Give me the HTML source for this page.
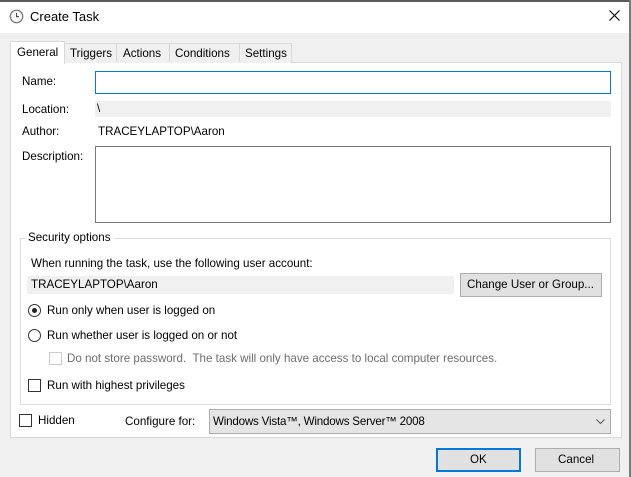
<!DOCTYPE html>
<html><head><meta charset="utf-8"><style>
*{box-sizing:border-box;margin:0;padding:0}
body{width:631px;height:477px;overflow:hidden;background:#f0f0f0;font-family:"Liberation Sans",sans-serif;font-size:11.6px;color:#000;position:relative}
.a{position:absolute;white-space:nowrap}
.t{line-height:14px}
</style></head><body>
<div class="a" style="left:0;top:0;width:631px;height:33px;background:#fff"></div>
<div class="a" style="left:0;top:0;width:631px;height:2px;background:#5a5a5a"></div>
<div class="a" style="left:629px;top:0;width:2px;height:477px;background:#7a7a7a"></div>
<svg class="a" style="left:9px;top:9px" width="15" height="15" viewBox="0 0 15 15"><circle cx="7.5" cy="7.5" r="6.3" fill="#e8e8e0" stroke="#777" stroke-width="1.2"/><circle cx="7.5" cy="7.5" r="4.6" fill="#fff"/><path d="M7.5 4v3.7h2.6" stroke="#444" stroke-width="1.1" fill="none"/></svg>
<div class="a t" style="left:30px;top:10px;font-size:13px">Create Task</div>
<svg class="a" style="left:609px;top:10px" width="11" height="11"><path d="M0.5 0.5L10.5 10.5M10.5 0.5L0.5 10.5" stroke="#000" stroke-width="1.1"/></svg>

<div class="a" style="left:10px;top:62px;width:612px;height:376px;background:#fff;border:1px solid #d9d9d9"></div>
<div class="a" style="left:10px;top:41px;width:55px;height:23px;background:#fff;border:1px solid #d9d9d9;border-bottom:none"></div>
<div class="a t" style="left:17px;top:46px">General</div>
<div class="a" style="left:64px;top:43px;width:228px;height:20px;background:#f0f0f0;border:1px solid #d9d9d9;border-bottom:none"></div>
<div class="a" style="left:116px;top:43px;width:1px;height:19px;background:#d9d9d9"></div>
<div class="a" style="left:169px;top:43px;width:1px;height:19px;background:#d9d9d9"></div>
<div class="a" style="left:239px;top:43px;width:1px;height:19px;background:#d9d9d9"></div>
<div class="a t" style="left:70px;top:47px">Triggers</div>
<div class="a t" style="left:123px;top:47px">Actions</div>
<div class="a t" style="left:175px;top:47px">Conditions</div>
<div class="a t" style="left:245px;top:47px">Settings</div>

<div class="a t" style="left:22px;top:75px">Name:</div>
<div class="a" style="left:95px;top:71px;width:516px;height:23px;border:1px solid #0078d7;background:#fff"></div>
<div class="a t" style="left:22px;top:103px">Location:</div>
<div class="a" style="left:95px;top:101px;width:516px;height:16px;background:#f0f0f0"></div>
<div class="a t" style="left:97px;top:102px">\</div>
<div class="a t" style="left:22px;top:125px">Author:</div>
<div class="a t" style="left:98px;top:125px">TRACEYLAPTOP\Aaron</div>
<div class="a t" style="left:22px;top:150px">Description:</div>
<div class="a" style="left:95px;top:146px;width:516px;height:77px;border:1px solid #7a7a7a;background:#fff"></div>

<div class="a" style="left:20px;top:238px;width:591px;height:167px;border:1px solid #dcdcdc"></div>
<div class="a t" style="left:25px;top:231px;background:#fff;padding:0 3px">Security options</div>
<div class="a t" style="left:31px;top:257px">When running the task, use the following user account:</div>
<div class="a" style="left:27px;top:276px;width:427px;height:18px;background:#f0f0f0"></div>
<div class="a t" style="left:31px;top:278px">TRACEYLAPTOP\Aaron</div>
<div class="a" style="left:460px;top:273px;width:142px;height:24px;background:#e1e1e1;border:1px solid #adadad"></div>
<div class="a t" style="left:467px;top:278px">Change User or Group...</div>

<div class="a" style="left:28px;top:304px;width:13px;height:13px;border:1px solid #333;border-radius:50%;background:#fff"></div>
<div class="a" style="left:32px;top:308px;width:5px;height:5px;border-radius:50%;background:#222"></div>
<div class="a t" style="left:47px;top:304px">Run only when user is logged on</div>
<div class="a" style="left:28px;top:329px;width:13px;height:13px;border:1px solid #333;border-radius:50%;background:#fff"></div>
<div class="a t" style="left:47px;top:329px">Run whether user is logged on or not</div>
<div class="a" style="left:49px;top:352px;width:13px;height:13px;border:1px solid #ccc;background:#fff"></div>
<div class="a t" style="left:67px;top:352px;color:#6d6d6d">Do not store password.&nbsp; The task will only have access to local computer resources.</div>
<div class="a" style="left:28px;top:379px;width:13px;height:13px;border:1px solid #333;background:#fff"></div>
<div class="a t" style="left:47px;top:379px">Run with highest privileges</div>

<div class="a" style="left:19px;top:414px;width:13px;height:13px;border:1px solid #333;background:#fff"></div>
<div class="a t" style="left:38px;top:414px">Hidden</div>
<div class="a t" style="left:125px;top:415px">Configure for:</div>
<div class="a" style="left:209px;top:409px;width:402px;height:25px;background:#e5e5e5;border:1px solid #adadad"></div>
<div class="a t" style="left:213px;top:415px;letter-spacing:-0.2px">Windows Vista™, Windows Server™ 2008</div>
<svg class="a" style="left:596px;top:419px" width="9" height="6"><path d="M0.5 0.5L4.5 4.5L8.5 0.5" stroke="#555" fill="none"/></svg>

<div class="a" style="left:436px;top:448px;width:85px;height:24px;background:#e1e1e1;border:2px solid #0078d7"></div>
<div class="a t" style="left:470px;top:453px">OK</div>
<div class="a" style="left:535px;top:448px;width:85px;height:24px;background:#e1e1e1;border:1px solid #adadad"></div>
<div class="a t" style="left:558px;top:453px">Cancel</div>
</body></html>
